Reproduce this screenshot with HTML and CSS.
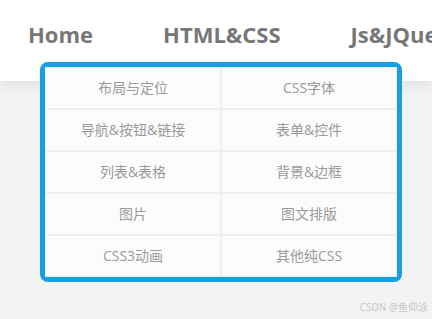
FILE: index.html
```html
<!DOCTYPE html>
<html lang="zh">
<head>
  <meta charset="UTF-8">
  <meta name="viewport" content="width=device-width, initial-scale=1.0">
  <title>导航菜单</title>
  <link rel="stylesheet" href="styles.css">
</head>
<body>
  <div class="header">
    <ul class="nav">
      <li>Home</li>
      <li>HTML&amp;CSS</li>
      <li>Js&amp;JQuery</li>
    </ul>
  </div>

  <div class="menu">
    <ul class="menu-list">
      <li>布局与定位</li>
      <li>CSS字体</li>
      <li>导航&amp;按钮&amp;链接</li>
      <li>表单&amp;控件</li>
      <li>列表&amp;表格</li>
      <li>背景&amp;边框</li>
      <li>图片</li>
      <li>图文排版</li>
      <li>CSS3动画</li>
      <li>其他纯CSS</li>
    </ul>
  </div>

  <div class="mark">CSDN @鱼仰泳</div>
</body>
</html>
```

FILE: styles.css
```css
* { box-sizing: border-box; margin: 0; padding: 0; }
body {
  background: #f3f3f3; width: 432px; height: 319px; overflow: hidden; position: relative;
  font-family: "Open Sans", "Noto Sans CJK SC", sans-serif;
}
ul { list-style: none; }

.header { background: #fff; height: 81px; box-shadow: 0 4px 14px rgba(0, 0, 0, 0.08); position: relative; z-index: 1; }
.nav { display: flex; gap: 70px; padding: 18px 0 0 28px; white-space: nowrap; overflow: hidden; }
.nav li { font-size: 22px; font-weight: bold; color: #777; line-height: 32px; }

.menu {
  position: absolute; left: 40px; top: 62px; z-index: 2;
  width: 362px; border: 5px solid #16a0e3; border-radius: 8px; background: #fcfcfc;
}
.menu-list { display: grid; grid-template-columns: 1fr 1fr; }
.menu-list li {
  height: 42px; border: 1px solid #efefef; display: flex; align-items: center; justify-content: center;
  font-size: 14px; color: #9a9a9a; background: #fcfcfc; padding-bottom: 2px;
}

.mark { position: absolute; right: 4px; bottom: 5px; font-size: 10px; color: #c8c8c8; font-family: "Noto Sans", "Noto Sans CJK SC", sans-serif; }
```
